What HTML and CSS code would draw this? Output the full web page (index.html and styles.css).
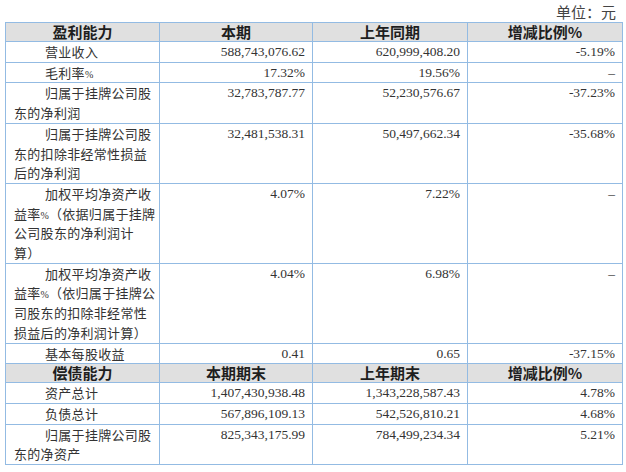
FILE: index.html
```html
<!DOCTYPE html>
<html lang="zh-CN">
<head>
<meta charset="utf-8">
<link rel="stylesheet" href="styles.css">
</head>
<body>
<div class="page">
  <div class="unit">单位：元</div>
  <table class="fin">
    <colgroup>
      <col class="c1"><col class="c2"><col class="c3"><col class="c4">
    </colgroup>
    <tr class="head">
      <th>盈利能力</th><th>本期</th><th>上年同期</th><th>增减比例%</th>
    </tr>
    <tr>
      <td class="label">营业收入</td><td class="num">588,743,076.62</td><td class="num">620,999,408.20</td><td class="num">-5.19%</td>
    </tr>
    <tr>
      <td class="label">毛利率<span class="pct">%</span></td><td class="num">17.32%</td><td class="num">19.56%</td><td class="num">–</td>
    </tr>
    <tr>
      <td class="label">归属于挂牌公司股东的净利润</td><td class="num">32,783,787.77</td><td class="num">52,230,576.67</td><td class="num">-37.23%</td>
    </tr>
    <tr>
      <td class="label">归属于挂牌公司股东的扣除非经常性损益后的净利润</td><td class="num">32,481,538.31</td><td class="num">50,497,662.34</td><td class="num">-35.68%</td>
    </tr>
    <tr>
      <td class="label">加权平均净资产收益率<span class="pct">%</span>（依据归属于挂牌公司股东的净利润计算）</td><td class="num">4.07%</td><td class="num">7.22%</td><td class="num">–</td>
    </tr>
    <tr>
      <td class="label">加权平均净资产收益率<span class="pct">%</span>（依归属于挂牌公司股东的扣除非经常性损益后的净利润计算）</td><td class="num">4.04%</td><td class="num">6.98%</td><td class="num">–</td>
    </tr>
    <tr>
      <td class="label">基本每股收益</td><td class="num">0.41</td><td class="num">0.65</td><td class="num">-37.15%</td>
    </tr>
    <tr class="head">
      <th>偿债能力</th><th>本期期末</th><th>上年期末</th><th>增减比例%</th>
    </tr>
    <tr>
      <td class="label">资产总计</td><td class="num">1,407,430,938.48</td><td class="num">1,343,228,587.43</td><td class="num">4.78%</td>
    </tr>
    <tr>
      <td class="label">负债总计</td><td class="num">567,896,109.13</td><td class="num">542,526,810.21</td><td class="num">4.68%</td>
    </tr>
    <tr>
      <td class="label">归属于挂牌公司股东的净资产</td><td class="num">825,343,175.99</td><td class="num">784,499,234.34</td><td class="num">5.21%</td>
    </tr>
  </table>
</div>
</body>
</html>
```

FILE: styles.css
```css
html, body {
  margin: 0;
  padding: 0;
  background: #ffffff;
}

.page {
  width: 626px;
  color: #333333;
  font-family: "Liberation Serif", "Noto Sans CJK SC", serif;
  text-spacing-trim: space-all;
}

.unit {
  height: 22px;
  line-height: 24px;
  font-size: 15px;
  text-align: right;
  padding-right: 10px;
  color: #444444;
  font-family: "Noto Sans CJK SC", sans-serif;
}

.fin {
  border-collapse: collapse;
  table-layout: fixed;
  width: 618px;
  margin-left: 5px;
}

.c1 { width: 154px; }
.c2 { width: 153px; }
.c3 { width: 155px; }
.c4 { width: 155px; }

.fin th,
.fin td {
  border: 1px solid #93bbe3;
  padding: 0;
  vertical-align: top;
}

.head th {
  background: #e0e0e0;
  height: 18px;
  line-height: 18px;
  font-size: 15px;
  font-weight: 700;
  color: #1e1e1e;
  text-align: center;
  font-family: "Noto Sans CJK SC", sans-serif;
}

.fin td {
  line-height: 19.7px;
  font-size: 13px;
}

.label {
  font-family: "Noto Sans CJK SC", sans-serif;
  letter-spacing: 0.3px;
  padding: 0 3px 0 8px !important;
  text-indent: 31px;
  word-break: break-all;
  text-spacing-trim: space-all;
}

.pct {
  font-family: "Liberation Serif", serif;
  font-size: 10px;
  line-height: 1;
  letter-spacing: 0;
}

.num {
  text-align: right;
  padding-right: 7px !important;
  font-size: 13.5px !important;
}
```
